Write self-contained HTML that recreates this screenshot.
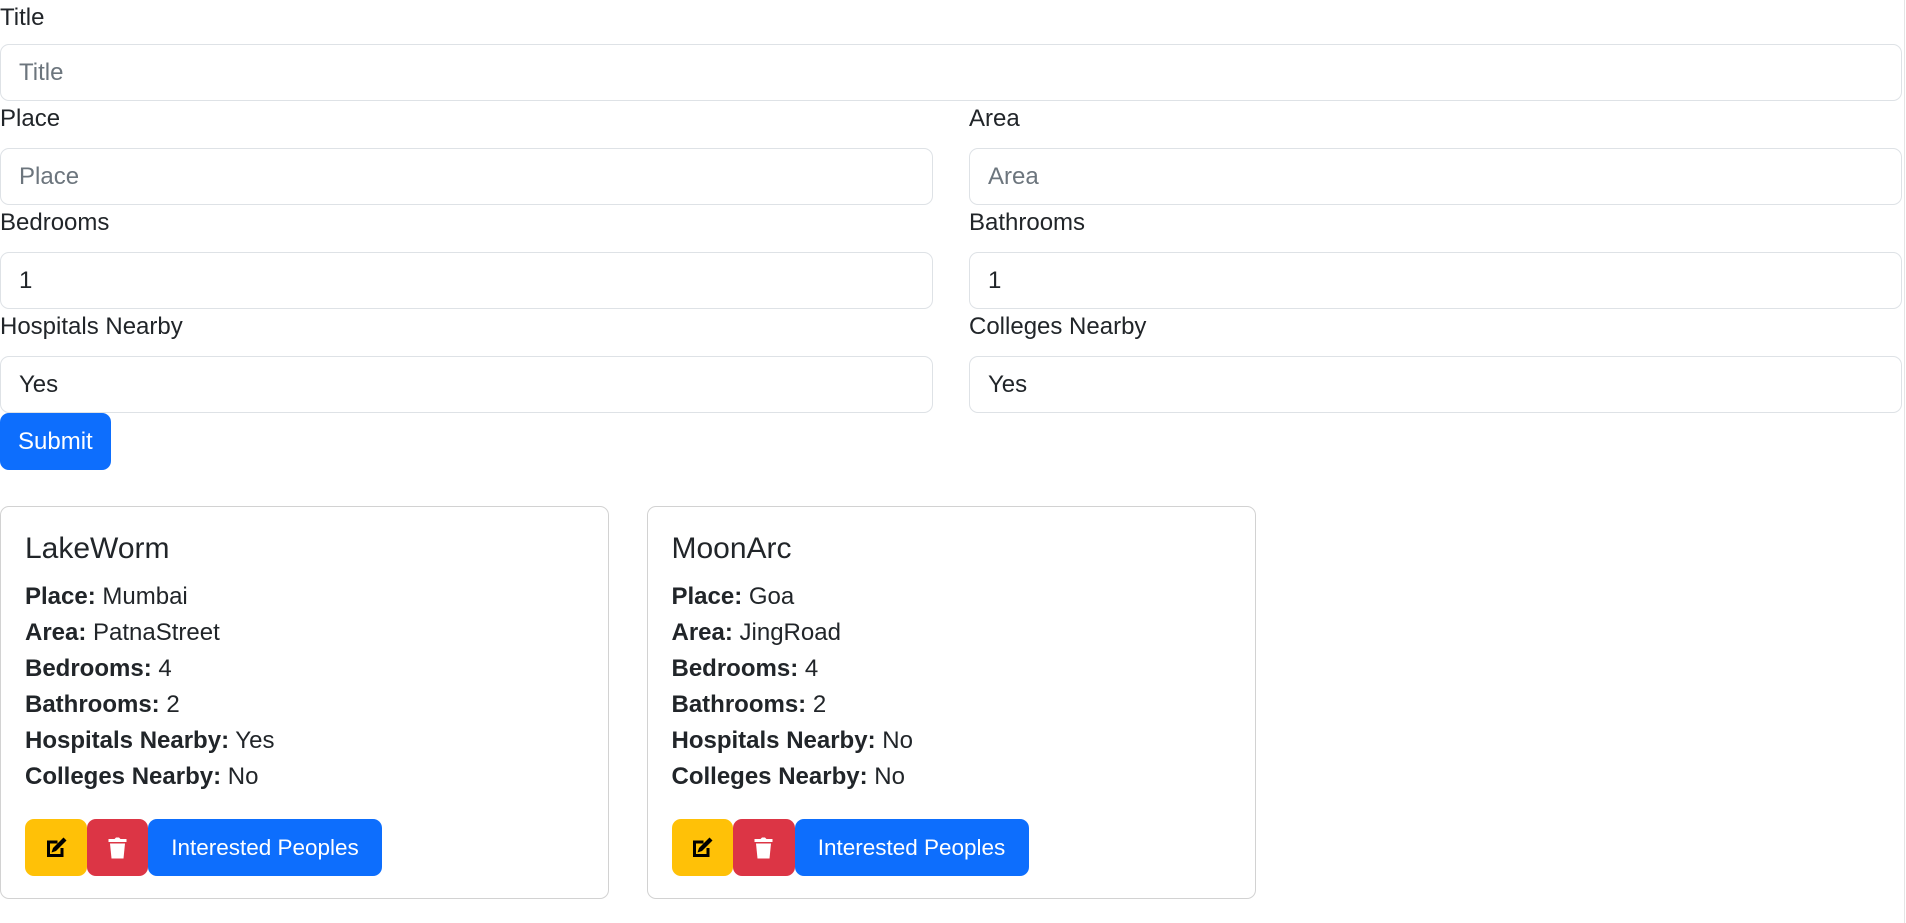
<!DOCTYPE html>
<html><head><meta charset="utf-8">
<style>
html,body{margin:0;padding:0;background:#fff;}
body{zoom:1.5;width:1270.6px;height:615.3px;overflow:hidden;position:relative;font-family:"Liberation Sans",sans-serif;font-size:16px;line-height:24px;color:#212529;}
.wrap{width:1268px;}
label{display:block;margin-bottom:7.3px;height:24px;}
label.first{margin-bottom:5.6px;}
input{display:block;box-sizing:border-box;width:100%;height:38px;padding:6px 12px;font:16px "Liberation Sans",sans-serif;color:#212529;border:1px solid #dee2e6;border-radius:6px;margin:0;outline:none;}
input::placeholder{color:#6c757d;}
.row{display:flex;gap:24px;}
.row>div{flex:1;}
.btn{display:inline-block;box-sizing:border-box;height:38px;line-height:38px;padding:0 12px;border:0;border-radius:6px;color:#fff;font-size:16px;vertical-align:top;text-align:center;white-space:nowrap;}
.primary{background:#0d6efd;}
.cards{display:flex;gap:25px;margin-top:24px;}
.card{box-sizing:border-box;width:406px;height:262px;border:1px solid rgba(0,0,0,.175);border-radius:6px;padding:16px;}
h5{margin:0 0 8px;font-size:20px;font-weight:500;line-height:24px;}
p{margin:0;}
.bt{margin-top:16px;display:flex;}
.y{background:#ffc107;width:41px;padding:0;}
.r{background:#dc3545;width:41px;padding:0;}
.btn svg{margin-top:11px;}
.ip{width:156px;padding:0;font-size:15px;}
.vl{position:absolute;left:1269px;top:0;width:1px;height:100%;background:#e5e5e5;}
</style></head><body>
<div class="wrap">
<label class="first">Title</label>
<input placeholder="Title">
<div class="row">
<div><label>Place</label><input placeholder="Place"></div>
<div><label>Area</label><input placeholder="Area"></div>
</div>
<div class="row">
<div><label>Bedrooms</label><input value="1"></div>
<div><label>Bathrooms</label><input value="1"></div>
</div>
<div class="row">
<div><label>Hospitals Nearby</label><input value="Yes"></div>
<div><label>Colleges Nearby</label><input value="Yes"></div>
</div>
<div class="btn primary">Submit</div>
<div class="cards">
<div class="card">
<h5>LakeWorm</h5>
<p><b>Place:</b> Mumbai</p>
<p><b>Area:</b> PatnaStreet</p>
<p><b>Bedrooms:</b> 4</p>
<p><b>Bathrooms:</b> 2</p>
<p><b>Hospitals Nearby:</b> Yes</p>
<p><b>Colleges Nearby:</b> No</p>
<div class="bt">
<div class="btn y"><svg width="16" height="16" viewBox="0 0 16 16"><path d="M2 3h7v2H4v7h7V8h2v6H2z" fill="#000"/><path d="M13 1l2 2-7 7-3 1 1-3z" fill="#000"/></svg></div>
<div class="btn r"><svg width="14" height="16" viewBox="0 0 14 16"><path d="M1 2h4l1-1h2l1 1h4v2H1z" fill="#fff"/><path d="M2 5h10l-1 10H3z" fill="#fff"/></svg></div>
<div class="btn primary ip">Interested Peoples</div>
</div>
</div>
<div class="card">
<h5>MoonArc</h5>
<p><b>Place:</b> Goa</p>
<p><b>Area:</b> JingRoad</p>
<p><b>Bedrooms:</b> 4</p>
<p><b>Bathrooms:</b> 2</p>
<p><b>Hospitals Nearby:</b> No</p>
<p><b>Colleges Nearby:</b> No</p>
<div class="bt">
<div class="btn y"><svg width="16" height="16" viewBox="0 0 16 16"><path d="M2 3h7v2H4v7h7V8h2v6H2z" fill="#000"/><path d="M13 1l2 2-7 7-3 1 1-3z" fill="#000"/></svg></div>
<div class="btn r"><svg width="14" height="16" viewBox="0 0 14 16"><path d="M1 2h4l1-1h2l1 1h4v2H1z" fill="#fff"/><path d="M2 5h10l-1 10H3z" fill="#fff"/></svg></div>
<div class="btn primary ip">Interested Peoples</div>
</div>
</div>
</div>
</div>
<div class="vl"></div>
</body></html>
